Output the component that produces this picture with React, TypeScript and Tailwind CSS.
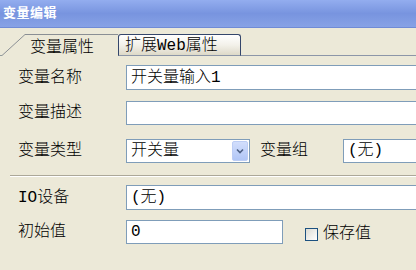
import React from "react";

const font = {
	fontFamily: '"Liberation Mono", "Noto Sans CJK SC", monospace',
};

function Field({ w, value }: { w: string; value?: string }) {
	return (
		<div
			className={`${w} h-full shrink-0 bg-white border border-[#7f9db9] flex items-center pl-[4px] text-[16px] leading-none text-black whitespace-nowrap`}
		>
			{value}
		</div>
	);
}

function Label({ children, w = "w-[108px]" }: { children: React.ReactNode; w?: string }) {
	return (
		<div className={`${w} shrink-0 text-[16px] leading-none text-black whitespace-nowrap`}>
			{children}
		</div>
	);
}

export default function App() {
	return (
		<div
			className="w-[416px] h-[270px] overflow-hidden bg-[#ece9d8] flex flex-col font-light"
			style={font}
		>
			{/* title bar */}
			<div className="h-[28px] shrink-0 bg-gradient-to-b from-[#93adef] via-[#7894df] to-[#87a2e6] flex items-center pl-[3px] text-white font-bold text-[13px] tracking-[0.5px] border-b border-[#6f8bd6]">
				变量编辑
			</div>

			{/* tab strip */}
			<div className="h-[28px] shrink-0 flex items-end">
				<div className="w-[2px] h-[22px] border-b border-[#919b9c]" />
				<div className="flex h-[22px] shrink-0">
					<svg width="23" height="22" className="shrink-0">
						<line x1="0" y1="21.5" x2="23" y2="0.5" stroke="#8a8f94" strokeWidth="1" />
					</svg>
					<div className="w-[93px] border-t border-[#8a8f94] pl-[5px] flex items-center pt-[4px] text-[16px] leading-none text-black">
						变量属性
					</div>
				</div>
				<div className="w-[123px] h-[22px] shrink-0 rounded-t-[3px] border-x border-t border-[#34466b] border-b border-b-[#8c96a8] bg-gradient-to-b from-white via-[#f3f1ea] to-[#ddd9c8] flex items-center pl-[6px] pt-[1px] text-[16px] leading-none text-black whitespace-nowrap">
					扩展Web属性
				</div>
				<div className="flex-1 h-px bg-[#8c96a8]" />
			</div>

			{/* form */}
			<div className="flex flex-col pl-[18px]">
				<div className="flex items-center h-[25px] mt-[9px]">
					<Label>变量名称</Label>
					<Field w="w-[300px]" value="开关量输入1" />
				</div>
				<div className="flex items-center h-[24px] mt-[11px]">
					<Label>变量描述</Label>
					<Field w="w-[300px]" />
				</div>
				<div className="flex items-center h-[24px] mt-[14px]">
					<Label>变量类型</Label>
					<div className="w-[124px] h-full shrink-0 bg-white border border-[#7f9db9] flex items-center text-[16px] leading-none text-black">
						<span className="flex-1 pl-[4px]">开关量</span>
						<div className="w-[16px] h-[20px] mr-[1px] rounded-[2px] bg-gradient-to-b from-[#d2defc] to-[#b1c6f6] border border-[#bccdf5] flex items-center justify-center">
							<svg width="8" height="6" viewBox="0 0 8 6">
								<path d="M1 1.5 L4 4.5 L7 1.5" fill="none" stroke="#4d6185" strokeWidth="1.6" />
							</svg>
						</div>
					</div>
					<div className="ml-[10px]">
						<Label w="w-[83px]">变量组</Label>
					</div>
					<Field w="w-[200px]" value="(无)" />
				</div>

				<div className="mt-[12px] -ml-[8px] flex flex-col">
					<div className="h-px bg-[#aca899]" />
					<div className="h-px bg-white" />
				</div>

				<div className="flex items-center h-[25px] mt-[8px]">
					<Label>IO设备</Label>
					<Field w="w-[300px]" value="(无)" />
				</div>
				<div className="flex items-center h-[24px] mt-[10px]">
					<Label>初始值</Label>
					<Field w="w-[157px]" value="0" />
					<div className="ml-[22px] mt-[4px] w-[13px] h-[13px] shrink-0 border border-[#1c5180] bg-gradient-to-br from-[#dcdcd4] to-white" />
					<div className="ml-[5px] mt-[3px] text-[16px] leading-none text-black whitespace-nowrap">
						保存值
					</div>
				</div>
			</div>
		</div>
	);
}
